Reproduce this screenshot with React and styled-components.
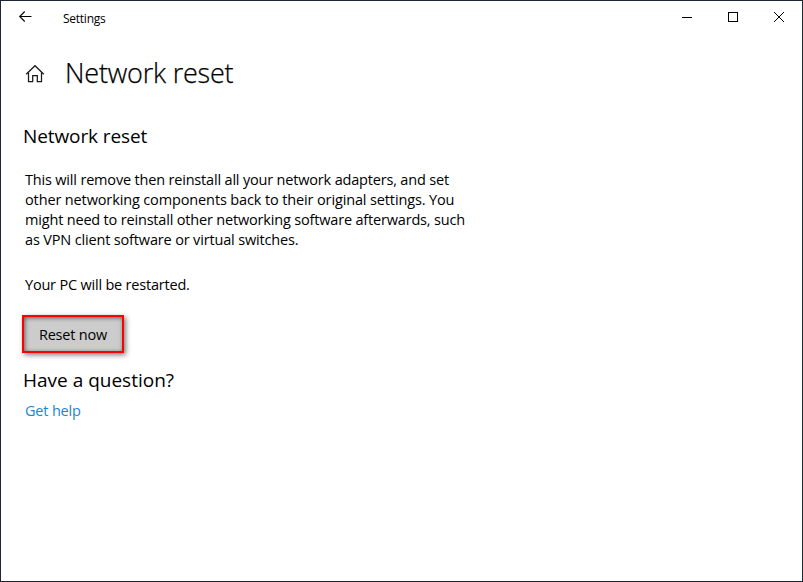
import React from 'react';
import styled, { createGlobalStyle } from 'styled-components';

const GlobalStyle = createGlobalStyle`
  * {
    box-sizing: border-box;
  }
  body {
    margin: 0;
    background: #fff;
    color: #000;
    font-family: "Open Sans", "Noto Sans", sans-serif;
  }
`;

const Window = styled.div`
  display: flex;
  flex-direction: column;
  width: 803px;
  height: 582px;
  border: 1px solid #1d2633;
  background: #fff;
  overflow: hidden;
`;

const TitleBar = styled.header`
  display: flex;
  align-items: center;
  height: 32px;
  flex: none;
`;

const BarButton = styled.button`
  display: flex;
  align-items: center;
  justify-content: center;
  width: ${({ $width }) => $width}px;
  height: 32px;
  padding: 0;
  border: 0;
  background: transparent;
`;

const AppName = styled.span`
  flex: 1;
  padding-left: 14px;
  padding-top: 3px;
  font-size: 12px;
  line-height: 16px;
  letter-spacing: -0.25px;
`;

const PageHeader = styled.div`
  display: flex;
  align-items: center;
  height: 40px;
  margin-top: 20px;
  padding-left: 23px;

  svg {
    margin-top: 1px;
  }
`;

const PageTitle = styled.h1`
  margin: 0 0 0 20px;
  font-size: 27px;
  font-weight: 300;
  line-height: 40px;
  letter-spacing: -0.2px;
  -webkit-text-stroke: 0.25px #000;
`;

const Content = styled.main`
  display: flex;
  flex-direction: column;
  align-items: flex-start;
  padding: 0 24px;
`;

const Heading = styled.h2`
  margin: ${({ $top }) => $top}px 0 0 -2px;
  font-size: 19px;
  font-weight: 400;
  line-height: 26px;
  letter-spacing: ${({ $spacing }) => $spacing}px;
`;

const Paragraph = styled.p`
  margin: ${({ $top }) => $top}px 0 0;
  font-size: 14.5px;
  line-height: 20px;
`;

const Line = styled.span`
  display: block;
  white-space: nowrap;
  letter-spacing: ${({ $spacing }) => $spacing}px;
`;

const ResetButton = styled.button`
  width: 102px;
  height: 38px;
  margin: 20px 0 0 -3px;
  padding: 2px 0 0;
  border: 2px solid #f00;
  background: #ccc;
  color: #000;
  font-family: inherit;
  font-size: 14.5px;
  line-height: 20px;
  letter-spacing: -0.2px;
  box-shadow: 2px 2px 5px rgba(0, 0, 0, 0.5), inset 1px 1px 4px rgba(0, 0, 0, 0.55);
`;

const HelpLink = styled.a`
  margin-top: 8px;
  color: #1a86d0;
  font-size: 14.5px;
  line-height: 20px;
  letter-spacing: -0.18px;
  text-decoration: none;
`;

const BackIcon = () => (
  <svg width="14" height="12" viewBox="0 0 14 12" fill="none" stroke="#000" strokeWidth="1.1">
    <path d="M13.5 5.5H1.7M6.7 0.5L1.7 5.5l5 5" />
  </svg>
);

const HomeIcon = () => (
  <svg width="21" height="20" viewBox="0 0 21 20" fill="none" stroke="#1a1a1a" strokeWidth="1.25">
    <path d="M2.2 10.2L11 1.7l8.8 8.5" />
    <path d="M4.5 8.4v9.1h4.2v-6h4.6v6h4.2V8.4" />
  </svg>
);

const MinimizeIcon = () => (
  <svg width="10" height="10" shapeRendering="crispEdges">
    <rect x="0" y="5" width="10" height="1" />
  </svg>
);

const MaximizeIcon = () => (
  <svg width="10" height="10" fill="none" stroke="#000">
    <rect x="0.5" y="0.5" width="9" height="9" />
  </svg>
);

const CloseIcon = () => (
  <svg width="10" height="10" stroke="#000">
    <path d="M0 0l10 10M10 0L0 10" />
  </svg>
);

const description = [
  { text: 'This will remove then reinstall all your network adapters, and set', spacing: -0.18 },
  { text: 'other networking components back to their original settings. You', spacing: -0.13 },
  { text: 'might need to reinstall other networking software afterwards, such', spacing: -0.18 },
  { text: 'as VPN client software or virtual switches.', spacing: -0.16 },
];

const App = () => {
  return (
    <>
      <GlobalStyle />
      <Window>
        <TitleBar>
          <BarButton $width={48} aria-label="Back"><BackIcon /></BarButton>
          <AppName>Settings</AppName>
          <BarButton $width={46} aria-label="Minimize"><MinimizeIcon /></BarButton>
          <BarButton $width={46} aria-label="Maximize"><MaximizeIcon /></BarButton>
          <BarButton $width={46} aria-label="Close"><CloseIcon /></BarButton>
        </TitleBar>
        <PageHeader>
          <HomeIcon />
          <PageTitle>Network reset</PageTitle>
        </PageHeader>
        <Content>
          <Heading $top={30} $spacing={-0.1}>Network reset</Heading>
          <Paragraph $top={21}>
            {description.map(({ text, spacing }) => (
              <Line key={text} $spacing={spacing}>{text}</Line>
            ))}
          </Paragraph>
          <Paragraph $top={25}>
            <Line $spacing={-0.2}>Your PC will be restarted.</Line>
          </Paragraph>
          <ResetButton>Reset now</ResetButton>
          <Heading $top={14} $spacing={0}>Have a question?</Heading>
          <HelpLink>Get help</HelpLink>
        </Content>
      </Window>
    </>
  );
};

export default App;
